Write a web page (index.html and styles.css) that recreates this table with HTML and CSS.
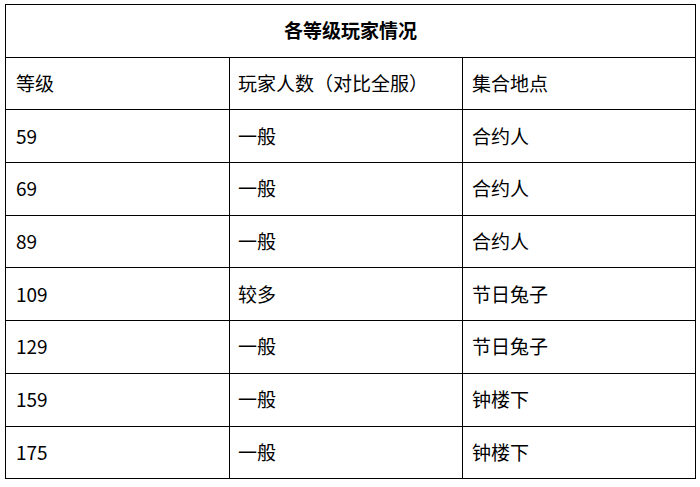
FILE: index.html
```html
<!DOCTYPE html>
<html lang="zh">
<head>
<meta charset="utf-8">
<link rel="stylesheet" href="styles.css">
</head>
<body>
<table class="grid">
  <colgroup>
    <col class="c1"><col class="c2"><col class="c3">
  </colgroup>
  <tr><th colspan="3" class="title">各等级玩家情况</th></tr>
  <tr><td>等级</td><td>玩家人数（对比全服）</td><td>集合地点</td></tr>
  <tr><td>59</td><td>一般</td><td>合约人</td></tr>
  <tr><td>69</td><td>一般</td><td>合约人</td></tr>
  <tr><td>89</td><td>一般</td><td>合约人</td></tr>
  <tr><td>109</td><td>较多</td><td>节日兔子</td></tr>
  <tr><td>129</td><td>一般</td><td>节日兔子</td></tr>
  <tr><td>159</td><td>一般</td><td>钟楼下</td></tr>
  <tr><td>175</td><td>一般</td><td>钟楼下</td></tr>
</table>
</body>
</html>
```
FILE: styles.css
```css
html, body {
  margin: 0;
  background: #ffffff;
}
body {
  padding: 4px 0 0 5px;
  font-family: "Noto Sans CJK SC", "Noto Sans", sans-serif;
  font-size: 19px;
  color: #000;
}
.grid {
  border-collapse: collapse;
  table-layout: fixed;
  width: 690px;
}
.c1 { width: 224px; }
.c2 { width: 233px; }
.c3 { width: 233px; }
.grid th, .grid td {
  border: 1px solid #000;
  height: 52.7px;
  padding: 0 0 2px 10px;
  text-align: left;
  vertical-align: middle;
  line-height: 1;
  font-weight: normal;
  box-sizing: border-box;
}
.grid td:nth-child(2) { padding-left: 8px; }
.grid td:nth-child(3) { padding-left: 9px; }
.grid th.title {
  text-align: center;
  font-weight: bold;
  padding: 0 0 2px 0;
}
```
